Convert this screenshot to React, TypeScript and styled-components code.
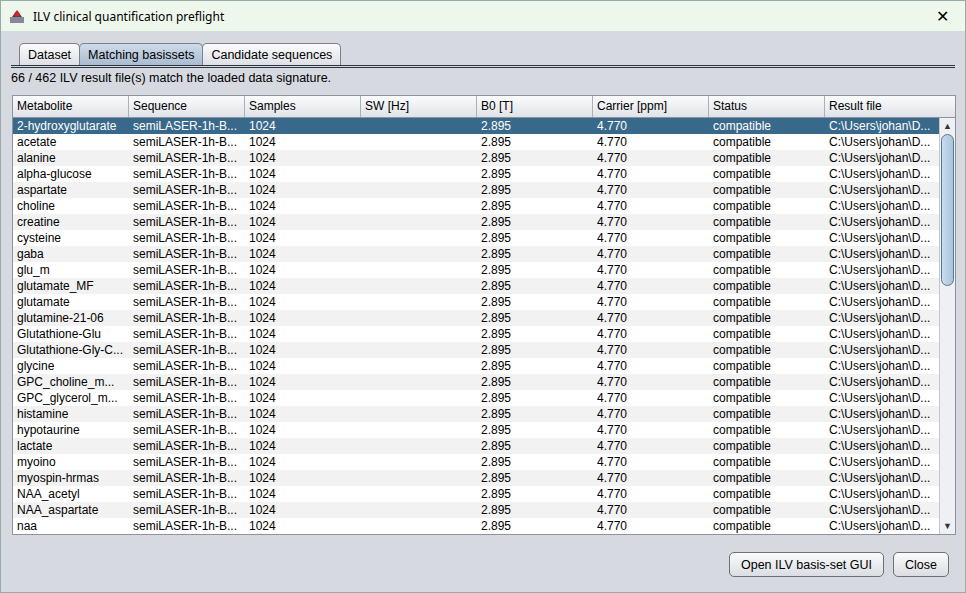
import React from "react";
import styled, { createGlobalStyle } from "styled-components";

const G = createGlobalStyle`
  html,body{margin:0;padding:0;}
  body{font-family:"Liberation Sans",Arial,sans-serif;font-size:12px;color:#000;}
`;
const Win = styled.div`width:966px;height:593px;background:#d6d9df;display:flex;flex-direction:column;overflow:hidden;box-sizing:border-box;border:1px solid #9aa;`;
const Title = styled.div`height:30px;background:#eef7ec;display:flex;align-items:center;padding:0 8px;gap:8px;font-family:"Segoe UI","Noto Sans",sans-serif;font-size:12px;`;
const Close = styled.div`margin-left:auto;font-size:16px;width:30px;text-align:center;`;
const Body = styled.div`flex:1;display:flex;flex-direction:column;padding:10px 10px 0 10px;`;
const Tabs = styled.div`display:flex;padding-left:8px;border-bottom:3px double #2e3440;height:24px;align-items:flex-end;`;
const Tab = styled.div<{ $a?: boolean }>`height:21px;padding:0 8px;display:flex;align-items:center;font-size:12.5px;border:1px solid #7b808a;border-bottom:none;border-radius:5px 5px 0 0;margin-right:-1px;background:${p => p.$a ? "linear-gradient(#cfdbe8,#a9bccf)" : "linear-gradient(#fbfbfc,#dde0e5)"};`;
const Info = styled.div`font-size:12.5px;margin:3px 0 10px;`;
const TableBox = styled.div`margin-left:1px;width:944px;height:440px;box-sizing:border-box;border:1px solid #8e939b;background:#fff;display:flex;overflow:hidden;`;
const Grid = styled.div`flex:none;width:926px;display:flex;flex-direction:column;overflow:hidden;`;
const Row = styled.div<{ $bg: string; $fg?: string }>`display:grid;grid-template-columns:repeat(8,116px);height:16px;line-height:16px;background:${p => p.$bg};color:${p => p.$fg || "#000"};font-size:12px;`;
const Cell = styled.div`padding-left:4px;white-space:nowrap;overflow:hidden;`;
const Head = styled.div`display:grid;grid-template-columns:repeat(8,116px);height:21px;background:linear-gradient(#fafbfc,#e0e3e8);border-bottom:1px solid #8e939b;`;
const HCell = styled.div`padding-left:4px;line-height:21px;font-size:12px;border-right:1px solid #aab0b8;`;
const Side = styled.div`flex:1;display:flex;flex-direction:column;`;
const Corner = styled.div`height:21px;background:linear-gradient(#fafbfc,#e0e3e8);border-bottom:1px solid #8e939b;`;
const Scroll = styled.div`flex:1;display:flex;flex-direction:column;background:#eef0f3;border-left:1px solid #c4c8ce;`;
const Arrow = styled.div`height:16px;font-size:9px;text-align:center;line-height:16px;color:#333;`;
const Thumb = styled.div`height:150px;margin:0 1px;border:1px solid #5a7690;border-radius:7px;background:linear-gradient(90deg,#c9dcec,#a8c4dc);`;
const Track = styled.div`flex:1;`;
const Footer = styled.div`display:flex;justify-content:flex-end;gap:9px;padding:17px 6px 0 0;`;
const Btn = styled.div`height:23px;padding:0 11px;display:flex;align-items:center;font-size:12.5px;border:1px solid #6c7178;border-radius:5px;background:linear-gradient(#fbfbfc,#dadde2);`;

const names = ["2-hydroxyglutarate","acetate","alanine","alpha-glucose","aspartate","choline","creatine","cysteine","gaba","glu_m","glutamate_MF","glutamate","glutamine-21-06","Glutathione-Glu","Glutathione-Gly-C...","glycine","GPC_choline_m...","GPC_glycerol_m...","histamine","hypotaurine","lactate","myoino","myospin-hrmas","NAA_acetyl","NAA_aspartate","naa"];
const heads = ["Metabolite","Sequence","Samples","SW [Hz]","B0 [T]","Carrier [ppm]","Status","Result file"];

export default function App() {
  return (<><G /><Win>
    <Title>
      <svg width="16" height="16" viewBox="0 0 16 16"><rect x="1" y="9" width="14" height="6" fill="#889" /><polygon points="8,2 13,9 3,9" fill="#445" /><circle cx="8" cy="6" r="2.5" fill="#d22" /></svg>
      <span>ILV clinical quantification preflight</span><Close>✕</Close>
    </Title>
    <Body>
      <Tabs><Tab>Dataset</Tab><Tab $a>Matching basissets</Tab><Tab>Candidate sequences</Tab></Tabs>
      <Info>66 / 462 ILV result file(s) match the loaded data signature.</Info>
      <TableBox>
        <Grid>
          <Head>{heads.map(h => <HCell key={h}>{h}</HCell>)}</Head>
          {names.map((n, i) => (
            <Row key={n} $bg={i === 0 ? "#39698a" : i % 2 ? "#fff" : "#f2f2f2"} $fg={i === 0 ? "#fff" : undefined}>
              <Cell>{n}</Cell><Cell>semiLASER-1h-B...</Cell><Cell>1024</Cell><Cell></Cell><Cell>2.895</Cell><Cell>4.770</Cell><Cell>compatible</Cell><Cell>C:\Users\johan\D...</Cell>
            </Row>))}
        </Grid>
        <Side><Corner /><Scroll><Arrow>▲</Arrow><Thumb /><Track /><Arrow>▼</Arrow></Scroll></Side>
      </TableBox>
      <Footer><Btn>Open ILV basis-set GUI</Btn><Btn>Close</Btn></Footer>
    </Body>
  </Win></>);
}
